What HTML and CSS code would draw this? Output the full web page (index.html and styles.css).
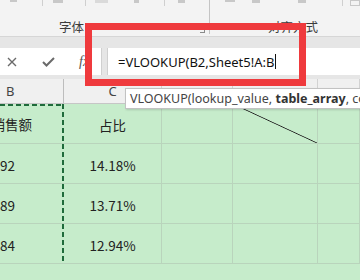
FILE: index.html
```html
<!DOCTYPE html>
<html lang="zh-CN">
<head>
    <meta charset="UTF-8">
    <title>VLOOKUP</title>
    <link rel="stylesheet" href="styles.css">
</head>
<body>

<div class="ribbon">
    <div class="group font-group">
        <div class="tools">
            <span class="tool w43"><i class="mark m1"></i></span>
            <span class="tool w43"><i class="mark m2"></i></span>
            <span class="tool w79"><i class="mark m3"></i><i class="mark m4"></i></span>
            <span class="tool last"><i class="mark m5"></i></span>
        </div>
        <div class="group-label font-label">字体</div>
        <span class="launcher"></span>
    </div>
    <div class="group align-group">
        <div class="tools">
            <span class="tool w133"><i class="mark m6"></i><i class="mark m7"></i><i class="mark m8"></i></span>
            <span class="tool last"><i class="mark m9"></i></span>
        </div>
        <div class="group-label align-label">对齐方式</div>
    </div>
</div>

<div class="bar-area">
    <div class="formula-bar">
        <div class="actions">
            <svg class="icon-x" width="10" height="10" viewBox="0 0 10 10">
                <path d="M1 1 L9 9 M9 1 L1 9" stroke="#6a6a6a" stroke-width="1.4" fill="none"/>
            </svg>
            <svg class="icon-check" width="13" height="10" viewBox="0 0 13 10">
                <path d="M1 5 L4.5 8.5 L12 1" stroke="#6a6a6a" stroke-width="2" fill="none"/>
            </svg>
            <span class="fx">fx</span>
        </div>
        <div class="input">=VLOOKUP(B2,Sheet5!A:B<span class="caret"></span></div>
    </div>
</div>

<div class="col-heads">
    <div class="head">B</div>
    <div class="head">C</div>
    <div class="head"></div>
    <div class="head"></div>
    <div class="head"></div>
</div>

<div class="sheet">
    <div class="cell b first title">销售额</div>
    <div class="cell">占比</div>
    <div class="cell"></div>
    <div class="cell diagonal"></div>
    <div class="cell"></div>

    <div class="cell b num">92</div>
    <div class="cell">14.18%</div>
    <div class="cell"></div>
    <div class="cell"></div>
    <div class="cell"></div>

    <div class="cell b num">89</div>
    <div class="cell">13.71%</div>
    <div class="cell"></div>
    <div class="cell"></div>
    <div class="cell"></div>

    <div class="cell b num">84</div>
    <div class="cell">12.94%</div>
    <div class="cell"></div>
    <div class="cell"></div>
    <div class="cell"></div>
</div>

<div class="tooltip">VLOOKUP(lookup_value, <b>table_array</b>, col_index_num, [range_lookup])</div>

<div class="highlight"></div>

</body>
</html>
```

FILE: styles.css
```css
body {
    margin: 0;
    width: 360px;
    height: 280px;
    overflow: hidden;
    position: relative;
    background-color: #c6eccb;
    font-family: "Noto Sans", "Noto Sans CJK SC", sans-serif;
    color: #222;
}

/* ribbon */
.ribbon {
    display: flex;
    height: 36px;
    background-color: #f3f3f3;
    border-bottom: 1px solid #d6d6d6;
}

.group {
    position: relative;
    height: 36px;
}

.font-group {
    width: 209px;
    border-right: 1px solid #c4c4c4;
    height: 34px;
}

.align-group {
    flex: 1;
}

.tools {
    display: flex;
    height: 6px;
}

.tool {
    position: relative;
    border-right: 1px solid #cfcfcf;
}

.tool.last {
    border-right: none;
    flex: 1;
}

.w43 { width: 42px; }
.w79 { width: 78px; }
.w133 { width: 132px; }

.mark {
    position: absolute;
    top: 0;
    height: 3px;
    background-color: #c8c8c8;
}

.m1 { left: 10px; width: 7px; height: 2px; }
.m2 { left: 10px; width: 10px; }
.m3 { left: 9px; width: 13px; background-color: #dadada; }
.m4 { left: 48px; width: 5px; }
.m5 { left: 13px; width: 7px; }
.m6 { left: 15px; width: 10px; height: 2px; }
.m7 { left: 42px; width: 8px; }
.m8 { left: 88px; width: 8px; }
.m9 { left: 7px; width: 8px; border: 1px solid #c8c8c8; background: none; height: 4px; }

.group-label {
    font-size: 12.5px;
    line-height: 14px;
    color: #3c3c3c;
    margin-top: 15px;
}

.font-label {
    padding-left: 59px;
}

.align-label {
    padding-left: 58px;
}

.launcher {
    position: absolute;
    right: 4px;
    bottom: 1px;
    width: 4px;
    height: 4px;
    border-right: 1px solid #8a8a8a;
    border-bottom: 1px solid #8a8a8a;
}

/* formula bar */
.bar-area {
    background-color: #e6e6e6;
    padding: 11px 0 4px;
}

.formula-bar {
    display: flex;
    gap: 5px;
    height: 27px;
}

.actions {
    width: 101px;
    display: flex;
    align-items: center;
    background-color: #fff;
    border-right: 1px solid #d0d0d0;
}

.icon-x {
    margin-left: 7px;
}

.icon-check {
    margin-left: 25px;
}

.fx {
    margin-left: 24px;
    font-family: "Liberation Serif", serif;
    font-style: italic;
    font-size: 14px;
    color: #555;
}

.input {
    flex: 1;
    display: flex;
    align-items: center;
    background-color: #fff;
    border-left: 1px solid #d0d0d0;
    padding-left: 10px;
    font-size: 13px;
    color: #111;
    white-space: nowrap;
}

.caret {
    display: inline-block;
    width: 1px;
    height: 15px;
    margin-left: 1px;
    background-color: #111;
}

/* column headers */
.col-heads {
    display: grid;
    grid-template-columns: 64px 98px 71px 85px 1fr;
    height: 24px;
    background-color: #f0f0f0;
    border-bottom: 1px solid #c6c6c6;
}

.head {
    display: flex;
    align-items: center;
    justify-content: center;
    border-right: 1px solid #d2d2d2;
    font-size: 13px;
    color: #444;
}

.head:first-child {
    justify-content: flex-start;
    padding-left: 6px;
    border-right-color: #bdbdbd;
}

/* sheet */
.sheet {
    display: grid;
    grid-template-columns: 64px 98px 71px 85px 1fr;
    grid-auto-rows: 40px;
    background-color: #c6eccb;
}

.cell {
    display: flex;
    align-items: center;
    justify-content: center;
    overflow: hidden;
    white-space: nowrap;
    border-right: 1px solid #b9d4bc;
    border-bottom: 1px solid #b9d4bc;
    font-family: "Noto Sans CJK SC", sans-serif;
    font-size: 13.5px;
    color: #222;
    padding-top: 2px;
}

.cell.b {
    justify-content: flex-end;
    border-right: none;
    background: repeating-linear-gradient(to bottom, #1f6b3b 0 5px, transparent 5px 8px) right top / 2px 100% no-repeat;
}

.cell.b.first {
    background:
        repeating-linear-gradient(to bottom, #1f6b3b 0 5px, transparent 5px 8px) right top / 2px 100% no-repeat,
        repeating-linear-gradient(to right, #1f6b3b 0 5px, transparent 5px 8px) left top / 100% 2px no-repeat;
}

.title {
    padding-right: 32px;
    padding-top: 0;
}

.num {
    padding-right: 49px;
}

.diagonal {
    background: linear-gradient(to top right, transparent calc(50% - 0.8px), #222 50%, transparent calc(50% + 0.8px));
}

/* overlays */
.tooltip {
    position: absolute;
    left: 125px;
    top: 88px;
    height: 19px;
    padding: 0 6px 0 4px;
    white-space: nowrap;
    background-color: #fff;
    border: 1px solid #c2c2c2;
    box-shadow: 1px 1px 2px rgba(0, 0, 0, 0.15);
    font-size: 12.5px;
    line-height: 19px;
    color: #444;
}

.tooltip b {
    color: #333;
}

.highlight {
    position: absolute;
    left: 85px;
    top: 23px;
    width: 207px;
    height: 49px;
    border: 7px solid #ef3a3d;
}
```
